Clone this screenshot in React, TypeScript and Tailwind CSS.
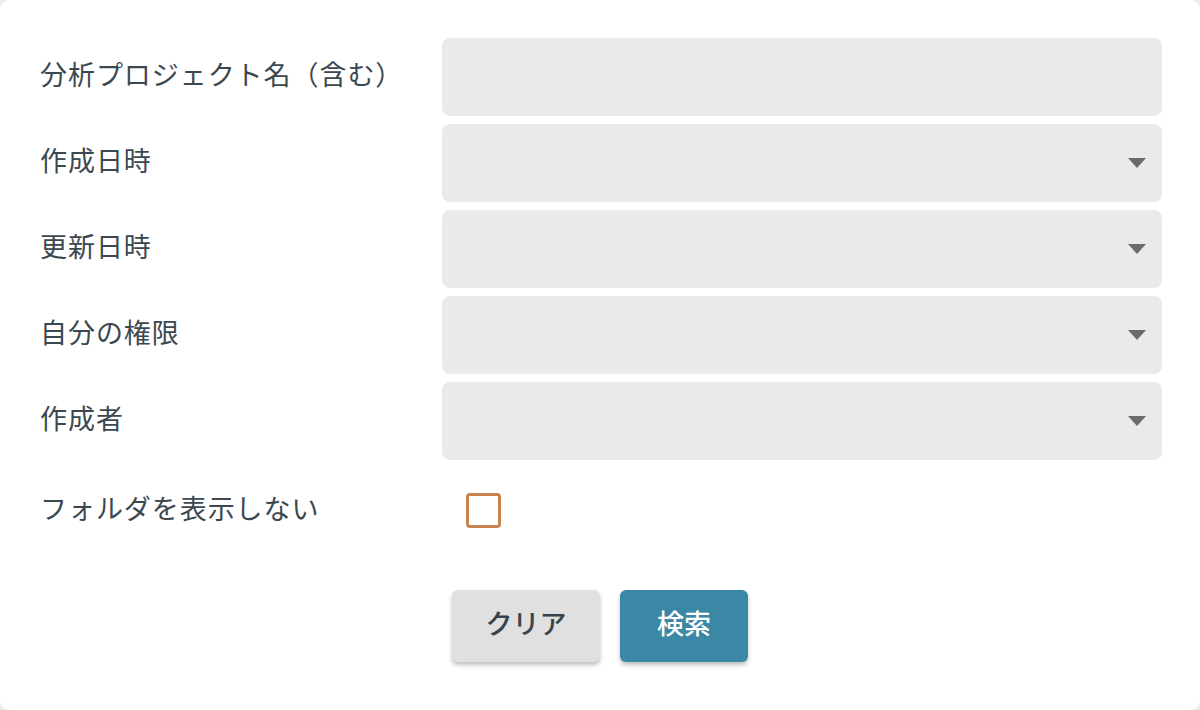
import { useState } from "react";

const font = {
  fontFamily: '"Noto Sans CJK JP", "Noto Sans", sans-serif',
};

function Caret() {
  return (
    <svg width="18" height="10" viewBox="0 0 18 10" className="shrink-0">
      <path d="M0 0 L18 0 L9 10 Z" fill="#6b6b6b" />
    </svg>
  );
}

function Row({ label, select }: { label: string; select?: boolean }) {
  return (
    <div className="flex items-center">
      <div className="w-[402px] shrink-0 pb-[5px] text-[27px] tracking-[0.035em] text-[#3b4850]">
        {label}
      </div>
      <div className="flex h-[78px] flex-1 items-center justify-end rounded-[8px] bg-[#e9eaeb] pr-[16px]">
        {select && <Caret />}
      </div>
    </div>
  );
}

export default function App() {
  const [checked, setChecked] = useState(false);
  return (
    <div className="h-[710px] w-[1200px] bg-[#ececec]" style={font}>
      <div className="flex h-full flex-col rounded-[10px] bg-white pl-[40px] pr-[38px] pt-[38px]">
        <div className="flex flex-col gap-[8px]">
          <Row label="分析プロジェクト名（含む）" />
          <Row label="作成日時" select />
          <Row label="更新日時" select />
          <Row label="自分の権限" select />
          <Row label="作成者" select />
        </div>
        <div className="mt-[28px] flex items-center">
          <div className="w-[426px] shrink-0 pb-[4px] text-[27px] tracking-[0.035em] text-[#3b4850]">
            フォルダを表示しない
          </div>
          <button
            onClick={() => setChecked(!checked)}
            className="h-[35px] w-[35px] rounded-[4px] border-[3px] border-[#c8834f] bg-white"
          />
        </div>
        <div className="mt-[57px] flex gap-[20px] pl-[412px]">
          <button className="h-[72px] w-[148px] rounded-[6px] bg-[#e0e0e0] pb-[4px] text-[27px] font-medium text-[#37434a] shadow-[0_3px_4px_rgba(0,0,0,0.25)]">
            クリア
          </button>
          <button className="h-[72px] w-[128px] rounded-[6px] bg-[#3a88a5] pb-[4px] text-[27px] font-medium text-white shadow-[0_3px_4px_rgba(0,0,0,0.25)]">
            検索
          </button>
        </div>
      </div>
    </div>
  );
}
